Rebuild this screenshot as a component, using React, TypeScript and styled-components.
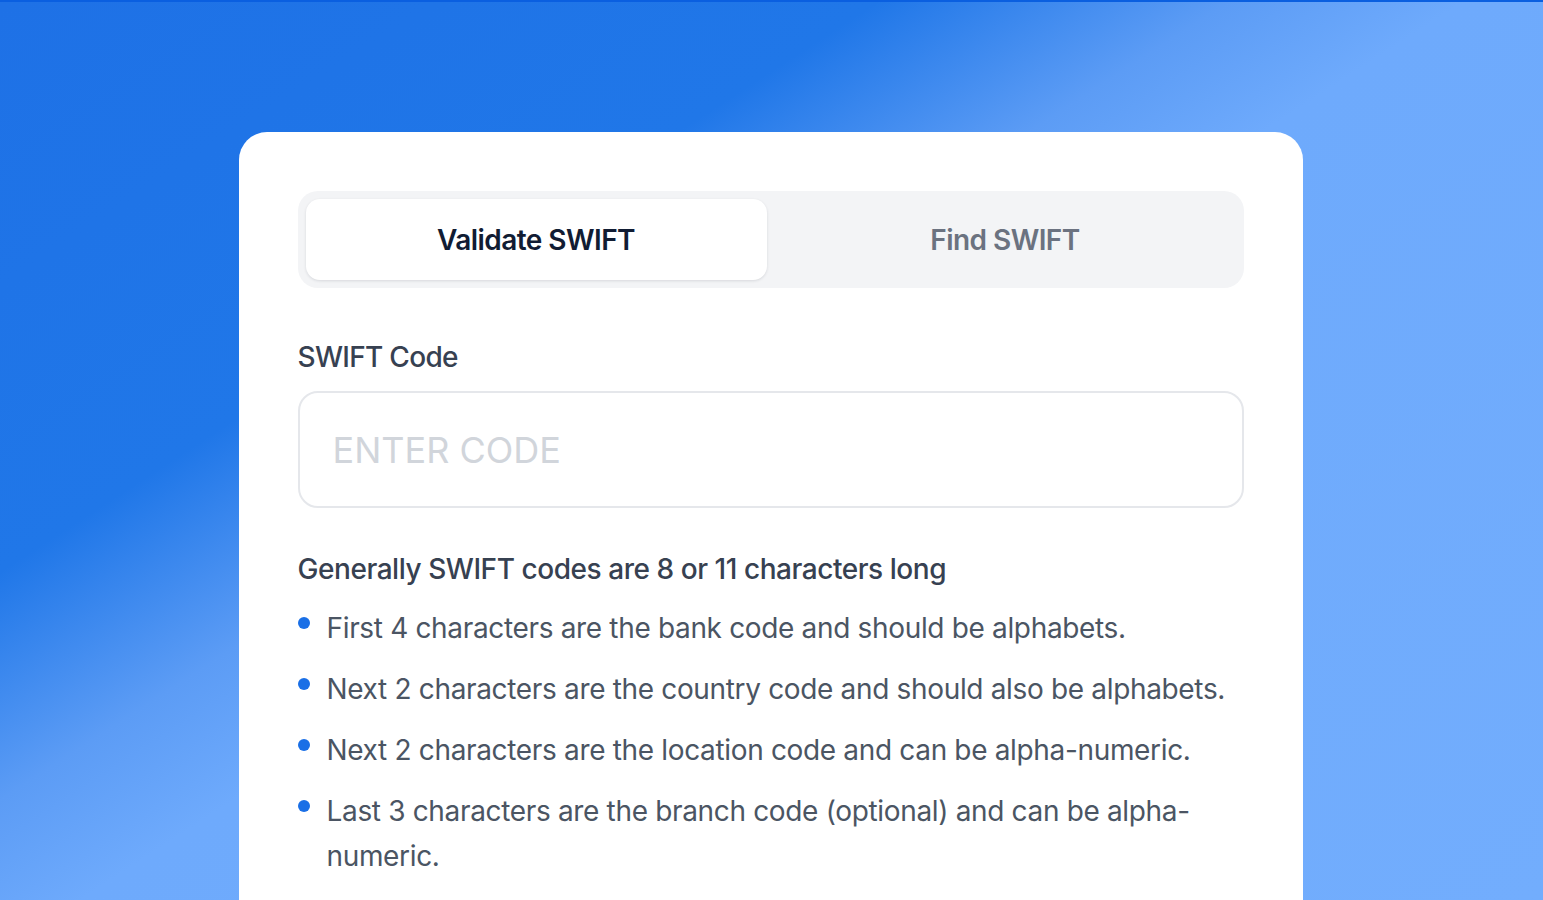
import React, { useState } from "react";
import styled, { createGlobalStyle } from "styled-components";

const GlobalStyle = createGlobalStyle`
  * { box-sizing: border-box; }
  html, body { margin: 0; padding: 0; }
  body {
    font-family: Inter, "Noto Sans", "Liberation Sans", sans-serif;
    -webkit-font-smoothing: antialiased;
  }
`;

const Page = styled.div`
  height: 100vh;
  overflow: hidden;
  border-top: 2px solid #0a5fe0;
  background: linear-gradient(
    147deg,
    #1e71e6 0%,
    #2077e8 30%,
    #5c9cf5 42%,
    #6eaafc 50%,
    #72adfd 100%
  );
  display: flex;
  justify-content: center;
  padding-top: 130px;
`;

const Card = styled.div`
  width: 1064px;
  margin-left: -2px;
  background: #ffffff;
  border-radius: 28px 28px 0 0;
  padding: 59px 59px 40px;
  min-height: 900px;
`;

const Tabs = styled.div`
  display: grid;
  grid-template-columns: 1fr 1fr;
  gap: 8px;
  padding: 8px;
  height: 97px;
  background: #f3f4f6;
  border-radius: 20px;
`;

const Tab = styled.button<{ $active?: boolean }>`
  border: none;
  cursor: pointer;
  font-family: inherit;
  font-size: 28px;
  font-weight: 560;
  letter-spacing: -0.02em;
  border-radius: 14px;
  color: ${p => (p.$active ? "#111c33" : "#6b7280")};
  background: ${p => (p.$active ? "#ffffff" : "transparent")};
  box-shadow: ${p => (p.$active ? "0 1px 3px rgba(15, 23, 42, 0.12)" : "none")};
`;

const Label = styled.label`
  display: block;
  margin-top: 52px;
  font-size: 28px;
  font-weight: 500;
  letter-spacing: -0.025em;
  color: #374151;
`;

const Input = styled.input`
  display: block;
  width: 100%;
  height: 117px;
  margin-top: 17px;
  padding: 0 33px;
  border: 2px solid #e5e7eb;
  border-radius: 20px;
  font-family: inherit;
  font-size: 36px;
  letter-spacing: 0;
  color: #111827;
  outline: none;
  &::placeholder {
    color: #d1d5db;
  }
`;

const Heading = styled.p`
  margin: 44px 0 0;
  font-size: 28px;
  font-weight: 500;
  letter-spacing: -0.016em;
  color: #374151;
`;

const List = styled.ul`
  list-style: none;
  margin: 20px 0 0;
  padding: 0;
  display: flex;
  flex-direction: column;
  gap: 16px;
`;

const Item = styled.li`
  display: flex;
  gap: 17px;
  font-size: 28px;
  line-height: 45px;
  letter-spacing: -0.012em;
  color: #4b5563;
`;

const Dot = styled.span`
  flex: none;
  width: 12px;
  height: 12px;
  margin-top: 11px;
  border-radius: 50%;
  background: #1a6fe6;
`;

const rules = [
  "First 4 characters are the bank code and should be alphabets.",
  "Next 2 characters are the country code and should also be alphabets.",
  "Next 2 characters are the location code and can be alpha-numeric.",
  "Last 3 characters are the branch code (optional) and can be alpha-numeric.",
];

export default function App() {
  const [tab, setTab] = useState<"validate" | "find">("validate");
  return (
    <>
      <GlobalStyle />
      <Page>
        <Card>
          <Tabs>
            <Tab $active={tab === "validate"} onClick={() => setTab("validate")}>
              Validate SWIFT
            </Tab>
            <Tab $active={tab === "find"} onClick={() => setTab("find")}>
              Find SWIFT
            </Tab>
          </Tabs>
          <Label htmlFor="swift">SWIFT Code</Label>
          <Input id="swift" placeholder="ENTER CODE" />
          <Heading>Generally SWIFT codes are 8 or 11 characters long</Heading>
          <List>
            {rules.map(r => (
              <Item key={r}>
                <Dot />
                <span>{r}</span>
              </Item>
            ))}
          </List>
        </Card>
      </Page>
    </>
  );
}
